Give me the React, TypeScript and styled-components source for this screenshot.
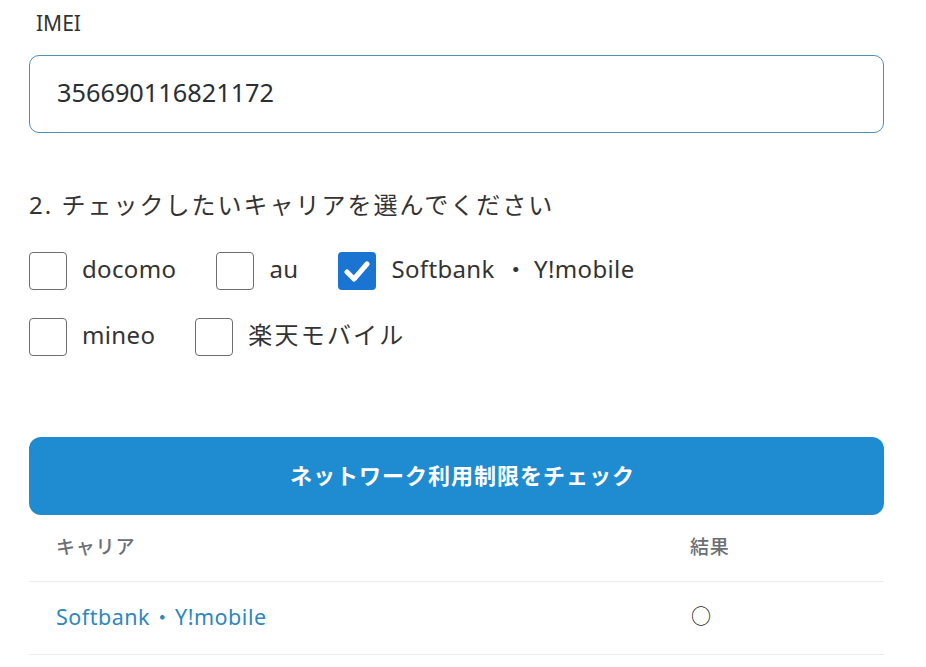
import React from "react";
import styled, { createGlobalStyle } from "styled-components";

const Global = createGlobalStyle`
  html, body { margin: 0; padding: 0; background: #fff; }
  body { font-family: "Noto Sans", "Noto Sans CJK JP", sans-serif; color: #2b2f33; }
`;

const Page = styled.div`
  width: 855px;
  padding: 0 0 0 29px;
`;

const Label = styled.div`
  font-size: 21px;
  line-height: 28px;
  padding: 9px 0 0 7px;
  height: 28px;
  color: #333;
`;

const Input = styled.div`
  box-sizing: border-box;
  margin-top: 18px;
  height: 78px;
  border: 1px solid #4f8fb0;
  border-radius: 10px;
  display: flex;
  align-items: center;
  padding: 0 0 5px 27px;
  font-size: 25.3px;
  color: #2a2f35;
`;

const Heading = styled.div`
  margin-top: 54px;
  font-size: 24px;
  line-height: 36px;
  letter-spacing: 2px;
  color: #333;
`;

const Options = styled.div`
  margin-top: 29px;
  display: flex;
  flex-direction: column;
  gap: 28px;
`;

const OptionRow = styled.div`
  display: flex;
  align-items: center;
`;

const Option = styled.label<{ $gap: number }>`
  display: flex;
  align-items: center;
  margin-right: ${(p) => p.$gap}px;
  font-size: 24px;
  line-height: 38px;
  height: 38px;
  color: #333;
`;

const OptionText = styled.span<{ $jp?: boolean }>`
  position: relative;
  top: -2px;
  letter-spacing: ${(p) => (p.$jp ? "2.2px" : "0.35px")};
`;

const Dot = styled.span<{ $left: number; $right: number }>`
  margin: 0 ${(p) => p.$right}px 0 ${(p) => p.$left}px;
`;

const Box = styled.span<{ $checked?: boolean }>`
  box-sizing: border-box;
  width: 38px;
  height: 38px;
  border-radius: 4px;
  border: ${(p) => (p.$checked ? "none" : "1.5px solid #6e6e6e")};
  background: ${(p) => (p.$checked ? "#1a74d2" : "#fff")};
  display: flex;
  align-items: center;
  justify-content: center;
  margin-right: 15px;
`;

const Button = styled.div`
  margin-top: 81px;
  height: 78px;
  box-sizing: border-box;
  padding: 0 0 5px 12px;
  border-radius: 12px;
  background: #1f8bd0;
  color: #fff;
  font-family: "Noto Sans CJK JP", sans-serif;
  font-weight: 700;
  font-size: 22px;
  letter-spacing: 1px;
  display: flex;
  align-items: center;
  justify-content: center;
`;

const Table = styled.div`
  display: flex;
  flex-direction: column;
`;

const Row = styled.div<{ $head?: boolean }>`
  display: grid;
  grid-template-columns: 634px 1fr;
  align-items: center;
  box-sizing: border-box;
  height: ${(p) => (p.$head ? 67 : 73)}px;
  padding: 0 0 5px 27px;
  border-bottom: 1.5px solid #ececec;
`;

const HeadCell = styled.div`
  font-family: "Noto Sans CJK JP", sans-serif;
  font-size: 19px;
  letter-spacing: 0.8px;
  color: #6a6f75;
  font-weight: 500;
`;

const Carrier = styled.div`
  font-size: 21.5px;
  letter-spacing: 0.5px;
  color: #2e87be;
`;

const Result = styled.div`
  font-family: "Noto Sans CJK JP", sans-serif;
  font-size: 20px;
  color: #222;
  padding-left: 1px;
`;

const Check = () => (
  <svg width="26" height="22" viewBox="0 0 26 22">
    <path d="M3 12 L10 19 L23 4" fill="none" stroke="#fff" strokeWidth="5" strokeLinecap="round" strokeLinejoin="round" />
  </svg>
);

export default function App() {
  return (
    <Page>
      <Global />
      <Label>IMEI</Label>
      <Input>356690116821172</Input>
      <Heading>2. チェックしたいキャリアを選んでください</Heading>
      <Options>
        <OptionRow>
          <Option $gap={40}><Box /><OptionText>docomo</OptionText></Option>
          <Option $gap={40}><Box /><OptionText>au</OptionText></Option>
          <Option $gap={0}>
            <Box $checked><Check /></Box>
            <OptionText>Softbank<Dot $left={9} $right={6}>・</Dot>Y!mobile</OptionText>
          </Option>
        </OptionRow>
        <OptionRow>
          <Option $gap={40}><Box /><OptionText>mineo</OptionText></Option>
          <Option $gap={0}><Box /><OptionText $jp>楽天モバイル</OptionText></Option>
        </OptionRow>
      </Options>
      <Button>ネットワーク利用制限をチェック</Button>
      <Table>
        <Row $head>
          <HeadCell>キャリア</HeadCell>
          <HeadCell>結果</HeadCell>
        </Row>
        <Row>
          <Carrier>Softbank<Dot $left={1.5} $right={1.5}>・</Dot>Y!mobile</Carrier>
          <Result>○</Result>
        </Row>
      </Table>
    </Page>
  );
}
